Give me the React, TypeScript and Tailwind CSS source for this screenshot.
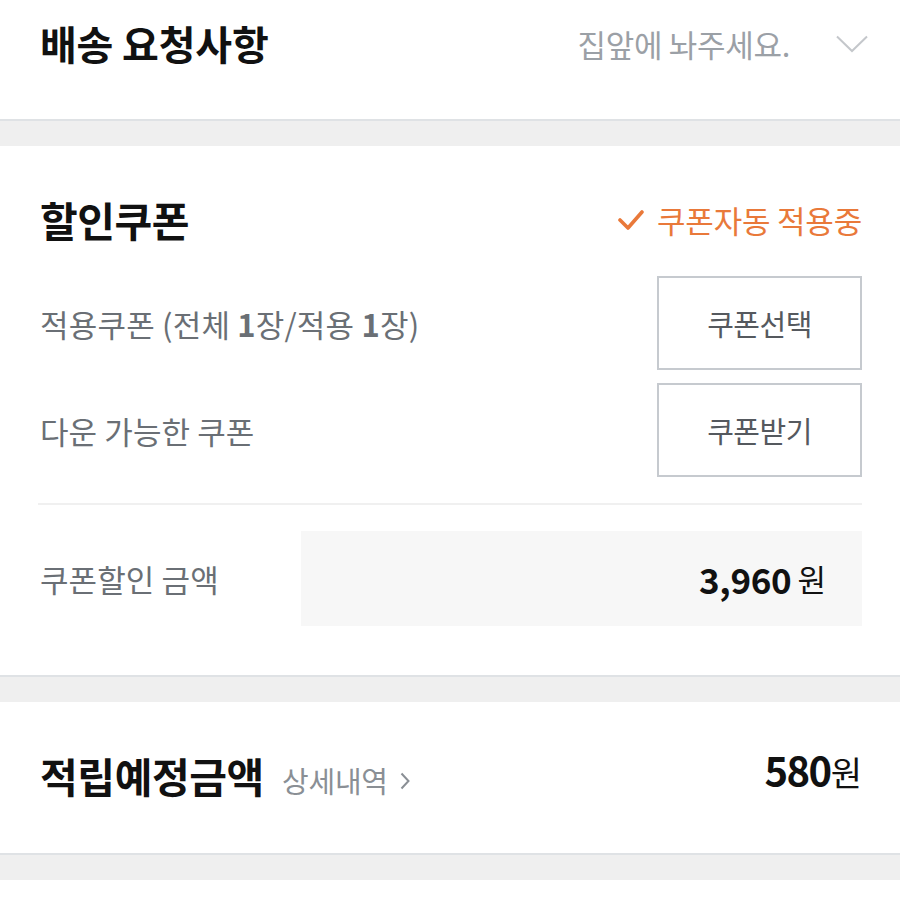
// Order sheet fragment: delivery note, coupon block, expected points.

const font = { fontFamily: '"Noto Sans CJK KR", "Noto Sans", sans-serif' };

function Gap() {
  return <div className="h-[27px] border-t-2 border-[#dfe2e5] bg-[#efefef]" />;
}

function CouponButton({ label }: { label: string }) {
  return (
    <button className="flex h-[94px] w-[205px] items-center justify-center border-2 border-[#c6cacf] bg-white text-[29px] leading-none tracking-[-0.5px] text-[#55595e]">
      {label}
    </button>
  );
}

export default function App() {
  return (
    <div style={font} className="min-h-[919px] w-[900px] bg-white">
      {/* 배송 요청사항 */}
      <div className="flex h-[119px] items-start justify-between pl-[40px] pr-[32px] pt-[18px]">
        <h2 className="text-[40px] font-bold leading-[50px] tracking-[-0.2px] text-[#111]">배송 요청사항</h2>
        <div className="flex h-[50px] items-center gap-[46px]">
          <span className="text-[31px] leading-none tracking-[-0.3px] text-[#9ba0a6]">집앞에 놔주세요.</span>
          <svg width="32" height="18" viewBox="0 0 32 18" fill="none" className="mt-[2px]">
            <path d="M1 1.5 L16 16 L31 1.5" stroke="#c4c7cb" strokeWidth="2" />
          </svg>
        </div>
      </div>
      <Gap />

      {/* 할인쿠폰 */}
      <div className="px-[38px] pb-[49px] pt-[48px]">
        <div className="flex h-[50px] items-center justify-between">
          <h2 className="pl-[2px] text-[41px] font-bold leading-none tracking-[-0.5px] text-[#111]">할인쿠폰</h2>
          <div className="flex items-center gap-[13px] text-[#e9793a]">
            <svg width="26" height="22" viewBox="0 0 26 22" fill="none" className="mt-[2px]">
              <path d="M2 11 L10 19 L24 3" stroke="#e9793a" strokeWidth="3.6" strokeLinecap="round" strokeLinejoin="round" />
            </svg>
            <span className="text-[31px] leading-none tracking-[-0.2px]">쿠폰자동 적용중</span>
          </div>
        </div>

        <div className="mt-[32px] flex items-center justify-between">
          <span className="pl-[2px] text-[31px] leading-none tracking-[0.2px] text-[#6a6f75]">
            적용쿠폰 (전체 <b className="font-bold">1</b>장/적용 <b className="font-bold">1</b>장)
          </span>
          <CouponButton label="쿠폰선택" />
        </div>
        <div className="mt-[13px] flex items-center justify-between">
          <span className="pl-[2px] text-[31px] leading-none tracking-[0.1px] text-[#6a6f75]">다운 가능한 쿠폰</span>
          <CouponButton label="쿠폰받기" />
        </div>

        <div className="mt-[26px] border-t-2 border-[#f0f0f0]" />

        <div className="mt-[26px] flex items-center justify-between">
          <span className="pl-[2px] text-[31px] leading-none tracking-[0.1px] text-[#6a6f75]">쿠폰할인 금액</span>
          <div className="flex h-[95px] w-[561px] items-center justify-end bg-[#f7f7f7] pr-[36px]">
            <span className="text-[35px] font-bold leading-none tracking-[-0.3px] text-[#111]">3,960</span>
            <span className="ml-[6px] text-[31px] leading-none text-[#111]">원</span>
          </div>
        </div>
      </div>
      <Gap />

      {/* 적립예정금액 */}
      <div className="flex h-[151px] items-center justify-between px-[38px] pb-[4px]">
        <div className="flex items-end gap-[18px] pl-[2px]">
          <h2 className="text-[41px] font-bold leading-none tracking-[-0.4px] text-[#111]">적립예정금액</h2>
          <span className="mb-[1px] flex items-center gap-[12px] text-[29px] leading-none tracking-[-0.2px] text-[#8a8f95]">
            상세내역
            <svg width="10" height="18" viewBox="0 0 10 18" fill="none">
              <path d="M1.5 1.5 L8.5 9 L1.5 16.5" stroke="#8a8f95" strokeWidth="2" />
            </svg>
          </span>
        </div>
        <div className="-mt-[14px] flex items-baseline">
          <span className="text-[40px] font-bold leading-none tracking-[-1.5px] text-[#111]">580</span>
          <span className="text-[34px] leading-none text-[#111]">원</span>
        </div>
      </div>
      <Gap />
    </div>
  );
}
